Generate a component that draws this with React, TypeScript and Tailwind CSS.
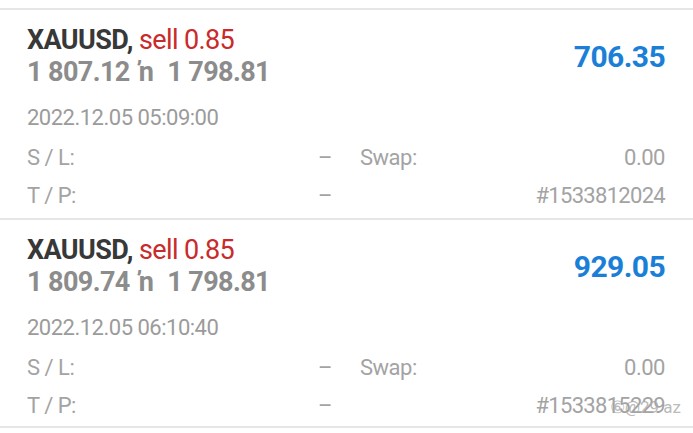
const trades = [
  {
    open: '1 807.12',
    close: '1 798.81',
    profit: '706.35',
    time: '2022.12.05 05:09:00',
    id: '#1533812024',
  },
  {
    open: '1 809.74',
    close: '1 798.81',
    profit: '929.05',
    time: '2022.12.05 06:10:40',
    id: '#1533815229',
  },
]

const TradeRow = ({ trade, last }: { trade: (typeof trades)[number]; last: boolean }) => {
  return (
    <div className={`relative h-[210px] border-t-2 border-[#e6e6e6] pl-[27px] pr-[28px] pt-[14px] ${last ? 'border-b-2' : ''}`}>
      {/* header */}
      <div className="flex items-center justify-between">
        <div className="text-[27px] leading-[32px] font-bold tracking-[-0.6px]">
          <div>
            <span className="text-[#383838]">XAUUSD,</span>{' '}
            <span className="font-normal text-[#c92a2a]">sell 0.85</span>
          </div>
          <div className="text-[#8c8c8c]">
            {trade.open}
            <span className="ml-[9px] mr-[14px]">ŉ</span>
            {trade.close}
          </div>
        </div>
        <div className="text-[30px] font-bold text-[#1b7fd8] tracking-[-0.6px]">{trade.profit}</div>
      </div>

      {/* details */}
      <div className="mt-[18px] text-[22px] leading-[24px] text-[#9b9b9b] tracking-[-0.5px]">{trade.time}</div>
      <div className="mt-[9px] grid grid-cols-2 gap-x-[28px] text-[22px] leading-[38px] text-[#a3a3a3] tracking-[-0.5px]">
        <div className="flex justify-between">
          <span>S / L:</span>
          <span>–</span>
        </div>
        <div className="flex justify-between">
          <span>Swap:</span>
          <span>0.00</span>
        </div>
        <div className="flex justify-between">
          <span>T / P:</span>
          <span>–</span>
        </div>
        <div className="relative flex justify-end">
          <span className="tracking-[-0.7px]">{trade.id}</span>
          {last && (
            <span className="absolute right-[-16px] top-[1px] text-[17px] text-[#a8a8a8]/80 tracking-normal">⑥@29 az</span>
          )}
        </div>
      </div>
    </div>
  )
}

const App = () => {
  return (
    <div className="w-[693px] h-[433px] bg-white pt-2 font-['Roboto',sans-serif] overflow-hidden">
      {trades.map((t, i) => (
        <TradeRow key={i} trade={t} last={i === trades.length - 1} />
      ))}
    </div>
  )
}

export default App
